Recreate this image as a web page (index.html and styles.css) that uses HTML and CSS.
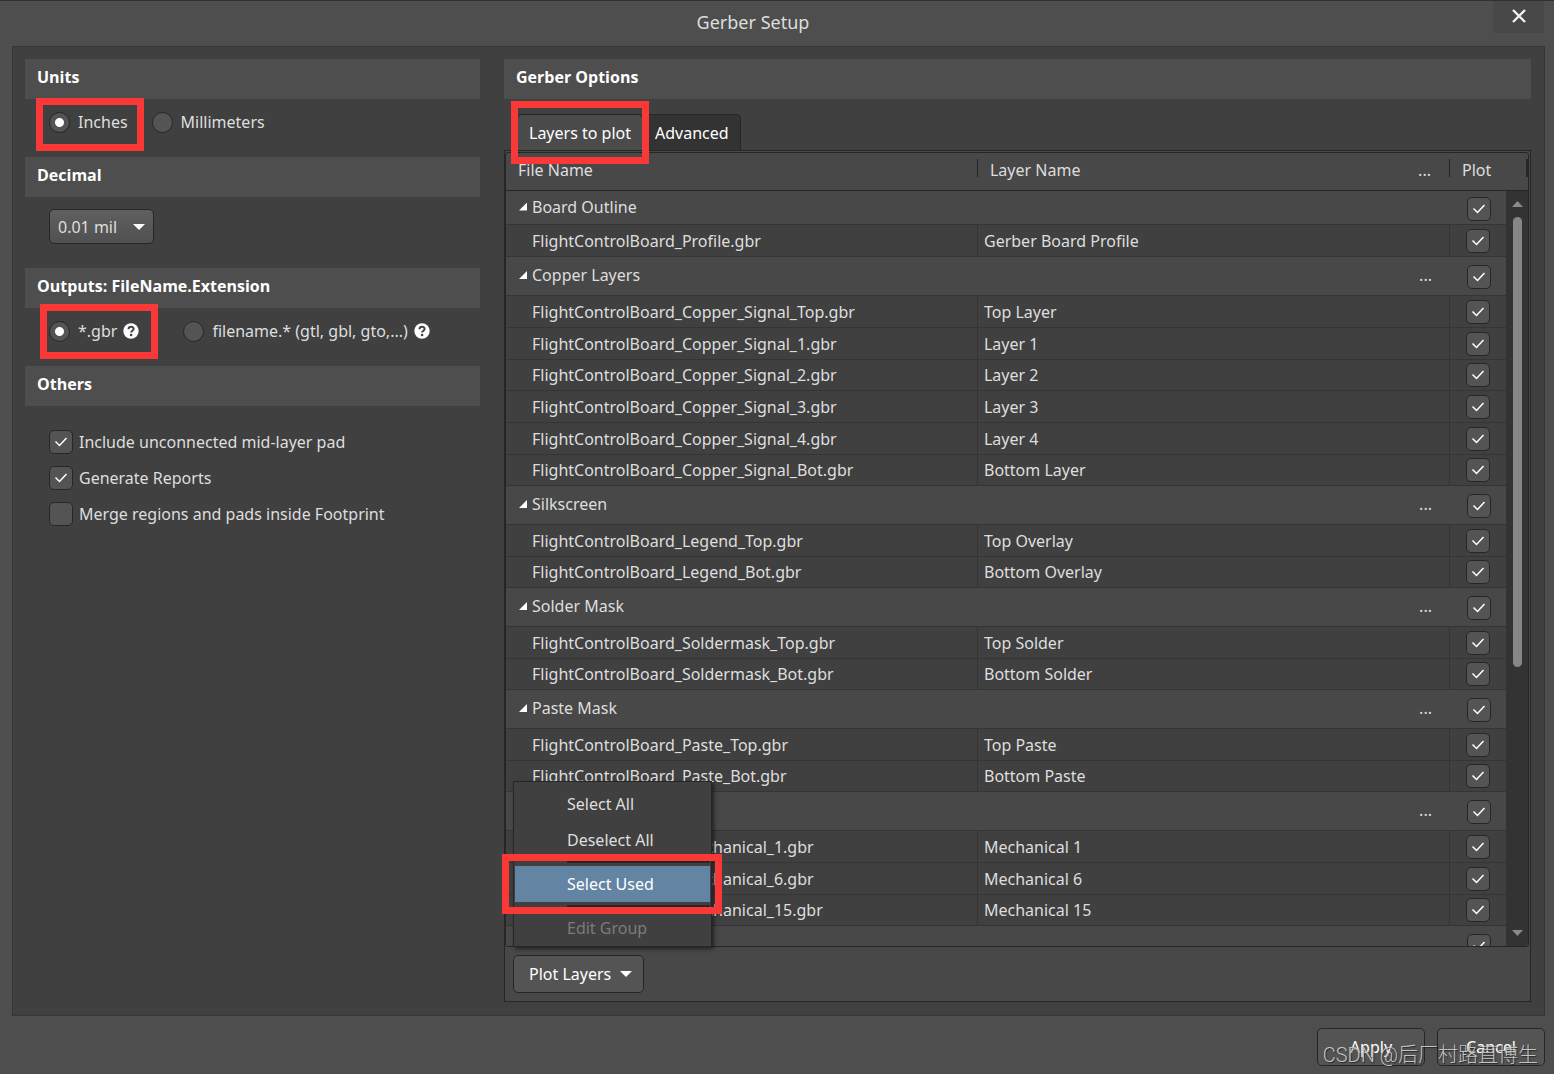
FILE: index.html
```html
<!DOCTYPE html>
<html lang="en">
<head>
<meta charset="utf-8">
<title>Gerber Setup</title>
<link rel="stylesheet" href="styles.css">
</head>
<body>
<div class="dialog">
  <header class="titlebar">
    <h1>Gerber Setup</h1>
    <button class="close" type="button" aria-label="Close"><svg width="14" height="14" viewBox="0 0 14 14"><path d="M1 1l12 12M13 1L1 13" stroke="#f0f0f0" stroke-width="2.4" fill="none"/></svg></button>
  </header>

  <main class="content">
    <form class="settings">
      <h2>Units</h2>
      <div class="options units">
        <label class="marked mark-inches"><input type="radio" name="units" checked>Inches</label>
        <label><input type="radio" name="units">Millimeters</label>
      </div>
      <h2>Decimal</h2>
      <div class="options decimal">
        <select aria-label="Decimal"><option>0.01 mil</option></select>
      </div>
      <h2>Outputs: FileName.Extension</h2>
      <div class="options outputs">
        <label class="marked mark-gbr"><input type="radio" name="ext" checked>*.gbr<svg class="help" width="16" height="16" viewBox="0 0 16 16"><circle cx="8" cy="8" r="7.7" fill="#fff"/><path d="M5.5 6.2C5.5 3 10.6 3 10.6 6c0 1.7-2.5 1.8-2.5 3.6" fill="none" stroke="#404040" stroke-width="2"/><circle cx="8.1" cy="12" r="1.3" fill="#404040"/></svg></label>
        <label><input type="radio" name="ext">filename.* (gtl, gbl, gto,...)<svg class="help" width="16" height="16" viewBox="0 0 16 16"><circle cx="8" cy="8" r="7.7" fill="#fff"/><path d="M5.5 6.2C5.5 3 10.6 3 10.6 6c0 1.7-2.5 1.8-2.5 3.6" fill="none" stroke="#404040" stroke-width="2"/><circle cx="8.1" cy="12" r="1.3" fill="#404040"/></svg></label>
      </div>
      <h2>Others</h2>
      <div class="others">
        <label><input type="checkbox" checked>Include unconnected mid-layer pad</label>
        <label><input type="checkbox" checked>Generate Reports</label>
        <label><input type="checkbox">Merge regions and pads inside Footprint</label>
      </div>
    </form>

    <section class="gerber">
      <h2>Gerber Options</h2>
      <div class="tabs" role="tablist">
        <button class="tab active marked mark-tab" type="button" role="tab" aria-selected="true">Layers to plot</button>
        <button class="tab" type="button" role="tab" aria-selected="false">Advanced</button>
      </div>
      <div class="panel">
        <div class="grid">
          <table>
            <colgroup><col class="c-file"><col class="c-layer"><col class="c-plot"><col class="c-bar"></colgroup>
            <thead><tr><th><span>File Name</span></th><th><span>Layer Name<i>...</i></span></th><th colspan="2"><span>Plot</span></th></tr></thead>
            <tbody class="first">
              <tr class="group"><td colspan="2"><div>Board Outline</div></td><td><input type="checkbox" aria-label="Board Outline" checked></td><td></td></tr>
              <tr><td>FlightControlBoard_Profile.gbr</td><td>Gerber Board Profile</td><td><input type="checkbox" aria-label="Gerber Board Profile" checked></td><td></td></tr>
            </tbody>
            <tbody>
              <tr class="group"><td colspan="2"><div>Copper Layers<i>...</i></div></td><td><input type="checkbox" aria-label="Copper Layers" checked></td><td></td></tr>
              <tr><td>FlightControlBoard_Copper_Signal_Top.gbr</td><td>Top Layer</td><td><input type="checkbox" aria-label="Top Layer" checked></td><td></td></tr>
              <tr><td>FlightControlBoard_Copper_Signal_1.gbr</td><td>Layer 1</td><td><input type="checkbox" aria-label="Layer 1" checked></td><td></td></tr>
              <tr><td>FlightControlBoard_Copper_Signal_2.gbr</td><td>Layer 2</td><td><input type="checkbox" aria-label="Layer 2" checked></td><td></td></tr>
              <tr><td>FlightControlBoard_Copper_Signal_3.gbr</td><td>Layer 3</td><td><input type="checkbox" aria-label="Layer 3" checked></td><td></td></tr>
              <tr><td>FlightControlBoard_Copper_Signal_4.gbr</td><td>Layer 4</td><td><input type="checkbox" aria-label="Layer 4" checked></td><td></td></tr>
              <tr><td>FlightControlBoard_Copper_Signal_Bot.gbr</td><td>Bottom Layer</td><td><input type="checkbox" aria-label="Bottom Layer" checked></td><td></td></tr>
            </tbody>
            <tbody>
              <tr class="group"><td colspan="2"><div>Silkscreen<i>...</i></div></td><td><input type="checkbox" aria-label="Silkscreen" checked></td><td></td></tr>
              <tr><td>FlightControlBoard_Legend_Top.gbr</td><td>Top Overlay</td><td><input type="checkbox" aria-label="Top Overlay" checked></td><td></td></tr>
              <tr><td>FlightControlBoard_Legend_Bot.gbr</td><td>Bottom Overlay</td><td><input type="checkbox" aria-label="Bottom Overlay" checked></td><td></td></tr>
            </tbody>
            <tbody>
              <tr class="group"><td colspan="2"><div>Solder Mask<i>...</i></div></td><td><input type="checkbox" aria-label="Solder Mask" checked></td><td></td></tr>
              <tr><td>FlightControlBoard_Soldermask_Top.gbr</td><td>Top Solder</td><td><input type="checkbox" aria-label="Top Solder" checked></td><td></td></tr>
              <tr><td>FlightControlBoard_Soldermask_Bot.gbr</td><td>Bottom Solder</td><td><input type="checkbox" aria-label="Bottom Solder" checked></td><td></td></tr>
            </tbody>
            <tbody>
              <tr class="group"><td colspan="2"><div>Paste Mask<i>...</i></div></td><td><input type="checkbox" aria-label="Paste Mask" checked></td><td></td></tr>
              <tr><td>FlightControlBoard_Paste_Top.gbr</td><td>Top Paste</td><td><input type="checkbox" aria-label="Top Paste" checked></td><td></td></tr>
              <tr><td>FlightControlBoard_Paste_Bot.gbr</td><td>Bottom Paste</td><td><input type="checkbox" aria-label="Bottom Paste" checked></td><td></td></tr>
            </tbody>
            <tbody>
              <tr class="group"><td colspan="2"><div>Mechanical<i>...</i></div></td><td><input type="checkbox" aria-label="Mechanical" checked></td><td></td></tr>
              <tr><td>FlightControlBoard_Mechanical_1.gbr</td><td>Mechanical 1</td><td><input type="checkbox" aria-label="Mechanical 1" checked></td><td></td></tr>
              <tr><td>FlightControlBoard_Mechanical_6.gbr</td><td>Mechanical 6</td><td><input type="checkbox" aria-label="Mechanical 6" checked></td><td></td></tr>
              <tr><td>FlightControlBoard_Mechanical_15.gbr</td><td>Mechanical 15</td><td><input type="checkbox" aria-label="Mechanical 15" checked></td><td></td></tr>
            </tbody>
            <tbody>
              <tr class="group"><td colspan="2"></td><td><input type="checkbox" aria-label="Next group" checked></td><td></td></tr>
            </tbody>
          </table>
          <div class="scrollbar">
            <svg width="11" height="6" viewBox="0 0 11 6"><path d="M0 6L5.5 0 11 6z" fill="#8a8a8a"/></svg>
            <div class="track"><div class="thumb"></div></div>
            <svg width="11" height="6" viewBox="0 0 11 6"><path d="M0 0h11L5.5 6z" fill="#8a8a8a"/></svg>
          </div>
        </div>
        <div class="actions">
          <div class="dropdown">
            <button class="btn plot" type="button">Plot Layers<svg width="12" height="6" viewBox="0 0 12 6"><path d="M0 0h12L6 6z" fill="#fff"/></svg></button>
            <div class="menu">
              <button type="button">Select All</button>
              <button type="button">Deselect All</button>
              <hr>
              <button type="button" class="current marked mark-item">Select Used</button>
              <hr>
              <button type="button" disabled>Edit Group</button>
            </div>
          </div>
        </div>
      </div>
    </section>
  </main>

  <footer class="buttons">
    <button class="btn" type="button">Apply</button>
    <button class="btn" type="button">Cancel</button>
    <span class="watermark">CSDN @后厂村路直博生</span>
  </footer>
</div>
</body>
</html>
```
FILE: styles.css
```css
* { box-sizing: border-box; }

body {
  margin: 0;
  background: #4e4e4e;
  color: #dedede;
  font: 16px/22px "Noto Sans", "Open Sans", sans-serif;
}

button, select, input { font: inherit; color: inherit; margin: 0; }
button { padding: 0; border: 0; background: none; }
i { font-style: normal; }

.dialog {
  display: flex;
  flex-direction: column;
  height: 100vh;
  min-height: 640px;
  border-top: 1px solid #303030;
}

.titlebar {
  position: relative;
  flex: none;
  height: 45px;
  padding-right: 48px;
}
h1 {
  margin: 0;
  font-size: 18px;
  font-weight: 400;
  line-height: 42px;
  text-align: center;
}
.close {
  position: absolute;
  top: 0;
  right: 10px;
  width: 51px;
  height: 32px;
  background: #484848;
}

.content {
  flex: 1;
  min-height: 0;
  display: grid;
  grid-template-columns: 455px 1fr;
  grid-template-rows: minmax(0, 1fr);
  gap: 24px;
  margin: 0 9px 0 12px;
  padding: 12px 13px 13px 12px;
  border: 1px solid #363636;
  background: #404040;
}

h2 {
  flex: none;
  height: 40px;
  margin: 0;
  padding-left: 12px;
  background: #4e4e4e;
  color: #fff;
  font-family: "Open Sans", sans-serif;
  font-size: 16px;
  font-weight: 700;
  line-height: 36px;
}

/* Left column */
.options {
  display: flex;
  align-items: flex-start;
  padding: 12px 24px 0;
}
.units { height: 58px; gap: 24px; }
.decimal { height: 71px; }
.outputs { height: 58px; gap: 44px; }
.others { padding: 18px 24px; }

label { position: relative; display: flex; align-items: center; }
.options label { gap: 8px; height: 22px; }
.others label { gap: 6px; height: 36px; }
.help { margin-left: -2px; }

input {
  appearance: none;
  flex: none;
  display: block;
  border: 1px solid #262626;
  background: #545454 center no-repeat;
}
input[type="radio"] { width: 21px; height: 21px; border-radius: 50%; }
input[type="radio"]:checked { background-image: radial-gradient(circle, #fff 4px, transparent 5px); }
input[type="checkbox"] { width: 24px; height: 24px; border-radius: 5px; }
input[type="checkbox"]:checked {
  background-image: url("data:image/svg+xml,%3Csvg xmlns='http://www.w3.org/2000/svg' width='14' height='10'%3E%3Cpath d='M1.5 4.5L5.5 8.5 12.5 1' fill='none' stroke='%23fff' stroke-width='1.5'/%3E%3C/svg%3E");
}

select {
  appearance: none;
  width: 105px;
  height: 35px;
  padding: 0 8px;
  border: 1px solid #262626;
  border-radius: 5px;
  background:
    url("data:image/svg+xml,%3Csvg xmlns='http://www.w3.org/2000/svg' width='12' height='6'%3E%3Cpath d='M0 0h12L6 6z' fill='%23fff'/%3E%3C/svg%3E") right 8px center no-repeat,
    linear-gradient(#606060, #505050);
}

/* Right column */
.gerber { display: flex; flex-direction: column; min-width: 0; }
.tabs {
  flex: none;
  display: flex;
  padding: 15px 13px 0;
}
.tab {
  position: relative;
  height: 36px;
  padding: 0 11px;
  border: 1px solid #262626;
  border-bottom: 0;
  border-radius: 5px 5px 0 0;
  background: #333;
  color: #fff;
}
.tab.active { background: #4b4b4b; }
.panel {
  flex: 1;
  min-height: 0;
  display: flex;
  flex-direction: column;
  border: 1px solid #262626;
  background: #484848;
}
.grid {
  position: relative;
  flex: 1;
  min-height: 0;
  overflow: hidden;
  margin: 1px 1px 0 0;
  border: 1px solid #262626;
  border-radius: 3px;
}

table {
  width: 100%;
  table-layout: fixed;
  border-spacing: 0;
}
.c-plot { width: 56px; }
.c-bar { width: 22px; }
th {
  height: 38px;
  padding: 0 0 7px;
  border-bottom: 1px solid #262626;
  font-weight: 400;
  text-align: left;
}
th span {
  display: flex;
  justify-content: space-between;
  height: 18px;
  padding: 0 18px 0 12px;
  border-right: 1px solid #262626;
  line-height: 22px;
}
th:last-child span { border-right-width: 2px; }
td {
  height: 32px;
  padding: 0 0 0 6px;
  border-bottom: 1px solid #353535;
  border-right: 1px solid #353535;
  background: #404040;
}
td:first-child { padding-left: 26px; }
td:nth-last-child(2) { padding-left: 16px; }
td:nth-last-child(-n+2) { border-right: 0; }
tr:nth-child(4) td, tbody:not(.first) tr:last-child td { height: 31px; }

tbody:nth-child(n) .group:nth-child(n) td { height: 39px; border-right: 0; background: #484848; }
tbody.first .group:nth-child(n) td { height: 34px; }
.group td:nth-last-child(2) { padding: 2px 0 0 17px; }
.group td:first-child { padding-left: 13px; }
.group div { display: flex; align-items: center; gap: 5px; padding-bottom: 2px; }
.group div::before {
  content: "";
  width: 8px;
  height: 8px;
  background: #fff;
  clip-path: polygon(100% 0, 100% 100%, 0 100%);
}
.group i { margin-left: auto; padding-right: 18px; }

.scrollbar {
  position: absolute;
  top: 38px;
  right: 0;
  bottom: 0;
  width: 22px;
  display: flex;
  flex-direction: column;
  align-items: center;
  padding: 10px 0;
  background: #333;
}
.track { flex: 1; width: 9px; padding: 10px 0; }
.thumb { height: 64%; border-radius: 5px; background: #868686; }

.btn {
  height: 38px;
  border: 1px solid #262626;
  border-radius: 5px;
  background: #545454;
  color: #fff;
}
.actions { flex: none; display: flex; padding: 8px; }
.dropdown { position: relative; }
.plot {
  display: flex;
  align-items: center;
  gap: 9px;
  padding: 0 11px 0 15px;
}

.menu {
  position: absolute;
  bottom: calc(100% + 8px);
  left: 0;
  width: 199px;
  padding: 4px 1px 0;
  border: 1px solid #262626;
  background: #404040;
  box-shadow: 2px 2px 4px #0008;
}
.menu button {
  position: relative;
  display: block;
  width: 100%;
  height: 36px;
  padding-left: 52px;
  text-align: left;
}
.menu .current { background: #6384a3; color: #fff; }
.menu button:disabled { color: #7b7b7b; }
.menu hr {
  height: 2px;
  margin: 3px 0 3px 52px;
  border: 0;
  background: #262626;
}

.buttons {
  position: relative;
  flex: none;
  display: flex;
  justify-content: flex-end;
  gap: 12px;
  padding: 12px 9px 8px;
}
.buttons .btn { width: 108px; }
.watermark {
  position: absolute;
  right: 16px;
  bottom: 5px;
  color: #c4c4c4;
  font: 300 20px/28px Roboto, "Noto Sans CJK SC", sans-serif;
  text-shadow: 1px 1px 1px #0008;
  white-space: nowrap;
}

/* Red call-out frames drawn over the controls */
.marked::after {
  content: "";
  position: absolute;
  z-index: 2;
  border: 7px solid #fb3838;
  pointer-events: none;
}
.mark-inches::after { inset: -13px -16px -18px -13px; }
.mark-gbr::after { inset: -16px -19px -17px -9px; }
.mark-tab::after { inset: -14px -7px -14px -7px; }
.mark-item::after { inset: -12px -12px -12px -13px; }
```
